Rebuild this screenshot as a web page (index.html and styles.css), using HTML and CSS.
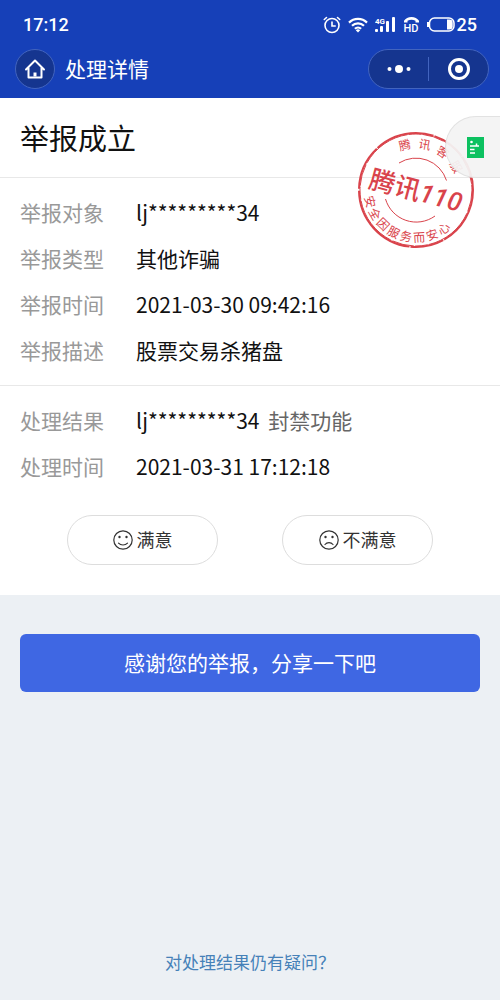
FILE: index.html
```html
<!doctype html>
<html lang="zh-CN">
  <head>
    <meta charset="UTF-8" />
    <meta name="viewport" content="width=device-width, initial-scale=1.0" />
    <title>处理详情</title>
    <link rel="stylesheet" href="styles.css">
  </head>
  <body>
    <header class="header">
      <div class="status-bar">
        <span>17:12</span>
        <div class="status-icons">
          <svg width="18" height="18" viewBox="0 0 18 18" fill="none" stroke="currentColor" stroke-width="1.6" stroke-linecap="round">
            <circle cx="9" cy="9.5" r="7" />
            <path d="M9 6v4h3.2M1.3 3.5l2.2-2M16.7 3.5l-2.2-2" />
          </svg>
          <svg width="20" height="16" viewBox="0 0 20 16" fill="none" stroke="currentColor" stroke-width="2.2">
            <path d="M1 5.6a12.8 12.8 0 0 1 18 0M4 8.8a8.6 8.6 0 0 1 12 0M6.9 11.8a4.5 4.5 0 0 1 6.2 0" />
            <path d="M7.800 13.200a3.200 3.200 0 0 1 4.400 0L10 15.600z" fill="currentColor" stroke="none" />
          </svg>
          <svg width="21" height="18" viewBox="0 0 21 18" fill="currentColor">
            <text x="0" y="8" class="network">4G</text>
            <rect x="0" y="13" width="3" height="3" rx="1" />
            <rect x="5" y="10" width="3" height="6" rx="1" />
            <rect x="11" y="5" width="3" height="11" rx="1" />
            <rect x="17" y="1" width="3" height="15" rx="1" />
          </svg>
          <svg width="17" height="20" viewBox="0 0 17 20" fill="currentColor">
            <path d="M1 7.5V5.8C2.600 3.400 5.300 2 8.500 2S14.400 3.400 16 5.800v1.700h-3.500V5.800a9 9 0 0 0-8 0v1.700z" />
            <text x="8" y="17" text-anchor="middle" class="hd">HD</text>
          </svg>
          <span class="battery">
            <svg width="28" height="15" viewBox="0 0 28 15">
              <rect x="2.500" y="1" width="24.500" height="13" rx="5" fill="none" stroke="currentColor" stroke-width="1.500" />
              <path d="M1 5v5" stroke="currentColor" stroke-width="2" />
              <path d="M20 2.500h2.500a3.200 3.200 0 0 1 3.200 3.200v3.600a3.200 3.200 0 0 1-3.200 3.200H20z" fill="currentColor" />
            </svg>
            25
          </span>
        </div>
      </div>
      <nav class="nav">
        <button class="home" aria-label="首页">
          <svg width="22" height="22" viewBox="0 0 22 22" fill="none" stroke="currentColor" stroke-width="2" stroke-linejoin="round" stroke-linecap="round">
            <path d="M2 11.500L11 2.500l9 9M4.500 10v9.500h13V10" />
            <path d="M11 14.500v4" stroke-width="3" stroke-linecap="butt" />
          </svg>
        </button>
        <h1 class="nav-title">处理详情</h1>
        <div class="capsule">
          <button aria-label="更多">
            <svg width="24" height="10" viewBox="0 0 24 10" fill="currentColor">
              <circle cx="2.500" cy="5" r="2" />
              <circle cx="12" cy="5" r="4" />
              <circle cx="21.500" cy="5" r="2" />
            </svg>
          </button>
          <button aria-label="关闭">
            <svg width="24" height="24" viewBox="0 0 24 24">
              <circle cx="12" cy="12" r="9.500" fill="none" stroke="currentColor" stroke-width="3" />
              <circle cx="12" cy="12" r="4" fill="currentColor" />
            </svg>
          </button>
        </div>
      </nav>
    </header>

    <main class="card">
      <h2 class="title">举报成立</h2>

      <dl class="details">
        <div class="row"><dt>举报对象</dt><dd>lj*********34</dd></div>
        <div class="row"><dt>举报类型</dt><dd>其他诈骗</dd></div>
        <div class="row"><dt>举报时间</dt><dd>2021-03-30 09:42:16</dd></div>
        <div class="row"><dt>举报描述</dt><dd>股票交易杀猪盘</dd></div>
      </dl>

      <dl class="details">
        <div class="row"><dt>处理结果</dt><dd>lj*********34 <span class="action">封禁功能</span></dd></div>
        <div class="row"><dt>处理时间</dt><dd>2021-03-31 17:12:18</dd></div>
      </dl>

      <div class="feedback">
        <button class="feedback-button">
          <svg width="20" height="20" viewBox="0 0 20 20" fill="none" stroke="currentColor" stroke-width="1.200" stroke-linecap="round">
            <circle cx="10" cy="10" r="9.200" />
            <path d="M5.500 13.200c2.400 2.400 6.600 2.400 9 0" />
            <circle cx="6.500" cy="7" r="1.200" fill="currentColor" stroke="none" />
            <circle cx="13.500" cy="7" r="1.200" fill="currentColor" stroke="none" />
          </svg>
          <span>满意</span>
        </button>
        <button class="feedback-button">
          <svg width="20" height="20" viewBox="0 0 20 20" fill="none" stroke="currentColor" stroke-width="1.200" stroke-linecap="round">
            <circle cx="10" cy="10" r="9.200" />
            <path d="M6 14.500c2-2.600 6-2.600 8 0" />
            <circle cx="6.500" cy="7" r="1.200" fill="currentColor" stroke="none" />
            <circle cx="13.500" cy="7" r="1.200" fill="currentColor" stroke="none" />
          </svg>
          <span>不满意</span>
        </button>
      </div>

      <svg class="stamp" width="120" height="120" viewBox="-60 -60 120 120">
        <defs>
          <path id="arc-top" d="M-42 0a42 42 0 0 1 84 0" />
          <path id="arc-bottom" d="M-52 0a52 52 0 0 0 104 0" />
        </defs>
        <g fill="none" stroke="currentColor">
          <circle r="57" stroke-width="2" stroke-dasharray="60 1 34 1 82 2 45 1" />
          <circle r="56" stroke-width="1" stroke-dasharray="22 2 51 1 13 1" />
          <path d="M-17-27A32 32 0 0 1 30.500-9.500M-30.500 9A32 32 0 0 0 19 26" />
        </g>
        <g fill="currentColor">
          <text class="stamp-small" text-anchor="middle" transform="rotate(23)">
            <textPath href="#arc-top" startOffset="50%">腾&ensp;讯&ensp;客&ensp;服</textPath>
          </text>
          <text class="stamp-small" text-anchor="middle" transform="rotate(20)">
            <textPath href="#arc-bottom" startOffset="50%">安&thinsp;全&thinsp;因&thinsp;服&thinsp;务&thinsp;而&thinsp;安&thinsp;心</textPath>
          </text>
          <text class="stamp-name" text-anchor="middle" y="10" transform="rotate(15)">腾讯<tspan class="stamp-number">110</tspan></text>
        </g>
      </svg>

      <button class="float-tab" aria-label="浮窗">
        <svg width="17" height="21" viewBox="0 0 17 21">
          <rect width="17" height="21" fill="#0cc160" />
          <path d="M3 9h9M3 12.500h4.500M3 16h5M9.500 6.500V9" stroke="#fff" stroke-width="1.500" />
          <circle cx="4.500" cy="5" r="1.300" fill="#fff" />
        </svg>
      </button>
    </main>

    <div class="share">
      <button class="share-button">感谢您的举报，分享一下吧</button>
    </div>

    <footer class="footer">
      <a href="#">对处理结果仍有疑问？</a>
    </footer>
  </body>
</html>
```

FILE: styles.css
```css
* {
  margin: 0;
  padding: 0;
  box-sizing: border-box;
}

body {
  display: flex;
  flex-direction: column;
  min-height: 100vh;
  font-family: 'Noto Sans CJK SC', sans-serif;
  font-size: 21px;
  background: #ecf0f4;
  color: #111;
}

button {
  font: inherit;
  color: inherit;
  border: none;
  background: none;
  cursor: pointer;
}

svg {
  display: block;
  flex-shrink: 0;
}

.header {
  background: #1640b8;
  color: #fff;
  padding-bottom: 9px;
}

.status-bar {
  display: flex;
  justify-content: space-between;
  align-items: center;
  height: 49px;
  padding: 0 23px;
  font-family: Roboto, sans-serif;
  font-size: 18px;
  font-weight: 500;
}

.status-icons {
  display: flex;
  align-items: center;
  gap: 7px;
}

.network {
  font-size: 8px;
  font-weight: 700;
}

.hd {
  font-size: 11px;
  font-weight: 500;
}

.battery {
  display: flex;
  align-items: center;
  gap: 2px;
}

.nav {
  display: flex;
  align-items: center;
  padding: 0 11px 0 15px;
}

.home {
  display: flex;
  align-items: center;
  justify-content: center;
  width: 40px;
  height: 40px;
  border: 1px solid #4264bf;
  border-radius: 50%;
  background: #15358f;
}

.nav-title {
  flex: 1;
  margin-left: 10px;
  font-size: 21px;
  line-height: 38px;
  padding-bottom: 2px;
  font-weight: 400;
}

.capsule {
  display: flex;
  align-items: center;
  width: 121px;
  height: 40px;
  border: 1px solid #4264bf;
  border-radius: 20px;
  background: #15358f;
}

.capsule button {
  flex: 1;
  display: flex;
  align-items: center;
  justify-content: center;
  height: 24px;
}

.capsule button + button {
  border-left: 1px solid #4264bf;
}

.card {
  position: relative;
  background: #fff;
  padding-bottom: 30px;
}

.title {
  padding: 0 20px;
  font-size: 29px;
  font-weight: 400;
  line-height: 79px;
}

.details {
  padding: 11px 20px 12px;
  border-top: 1px solid #e8e8e8;
}

.row {
  display: flex;
  line-height: 46px;
}

.row dt {
  width: 116px;
  color: #999;
}

.action {
  margin-left: 4px;
  color: #666;
}

.feedback {
  display: flex;
  justify-content: center;
  gap: 64px;
  margin-top: 14px;
}

.feedback-button {
  display: flex;
  align-items: center;
  justify-content: center;
  gap: 4px;
  width: 151px;
  height: 50px;
  border: 1px solid #ddd;
  border-radius: 25px;
  font-size: 18px;
  color: #333;
}

.feedback-button span {
  padding-bottom: 3px;
}

/* seal over the top right corner of the card */
.stamp {
  position: absolute;
  top: 32px;
  right: 24px;
  color: #d9434b;
  pointer-events: none;
}

.stamp-small {
  font-size: 12px;
}

.stamp-name {
  font-size: 26px;
  font-weight: 500;
}

.stamp-number {
  font-family: Roboto, sans-serif;
  font-style: italic;
}

.float-tab {
  position: absolute;
  top: 18px;
  right: 0;
  display: flex;
  align-items: center;
  width: 55px;
  height: 62px;
  padding-left: 21px;
  border: 1px solid #e2e2e2;
  border-right: none;
  border-radius: 31px 0 0 31px;
  background: rgba(243, 243, 243, 0.94);
}

.share {
  padding: 39px 20px;
}

.share-button {
  width: 100%;
  height: 58px;
  padding-bottom: 2px;
  border-radius: 6px;
  background: #3f67e3;
  color: #fff;
}

.footer {
  margin-top: auto;
  padding-bottom: 26px;
  text-align: center;
  font-size: 17px;
  line-height: 24px;
}

.footer a {
  color: #4681b8;
  text-decoration: none;
}
```
